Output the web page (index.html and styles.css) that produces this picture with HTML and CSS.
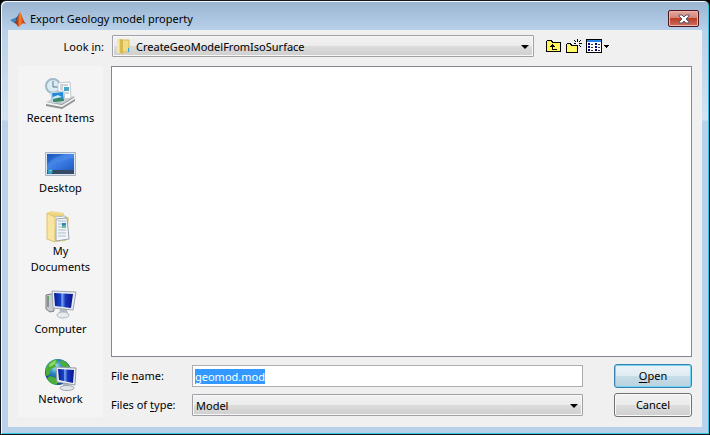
FILE: index.html
```html
<!DOCTYPE html>
<html lang="en">
<head>
<meta charset="utf-8">
<title>Export Geology model property</title>
<link rel="stylesheet" href="styles.css">
</head>
<body>
<main class="window">
  <header class="titlebar">
    <svg class="app-icon" viewBox="0 0 16 16" aria-hidden="true">
      <defs><linearGradient id="flame"><stop offset="0" stop-color="#5b1c2c"/><stop offset=".3" stop-color="#b8401c"/><stop offset=".5" stop-color="#f08a30"/><stop offset=".7" stop-color="#e0501c"/><stop offset="1" stop-color="#8a1a14"/></linearGradient></defs>
      <path d="M0 9l5-2 2 3-3 2z" fill="#3f86b8"/>
      <path d="M5 7c2 0 3-3 5-6L7 10z" fill="#245a8c"/>
      <path d="M4 12c2-1 4-7 6-11 2 2 3 9 6 12-2-1-3-1-4 0s-2 2-4 3c-1-2-2-4-4-4z" fill="url(#flame)"/>
    </svg>
    <h1 class="title">Export Geology model property</h1>
    <button class="close" type="button" aria-label="Close">
      <svg viewBox="0 0 12 10" aria-hidden="true"><path d="M1 1h3l2 2 2-2h3v1L8 5l3 3v1H8L6 7 4 9H1V8l3-3-3-3z" fill="#fff" stroke="#555a70"/></svg>
    </button>
  </header>

  <form class="dialog">
    <div class="lookin">
      <label class="lookin-label" for="folder">Look <u>i</u>n:</label>
      <div class="combo combo-folder">
        <select id="folder"><option>CreateGeoModelFromIsoSurface</option></select>
        <svg class="folder-icon" viewBox="0 0 16 16" aria-hidden="true">
          <path d="M2 1h5v14H2z" fill="#efd878"/><path d="M2 1h2v14H2z" fill="#f8e9a0"/>
          <path d="M7 2h7v12H7z" fill="#f0dc84" stroke="#d9bd58"/><path d="M5 1l3 1v14l-3-1z" fill="#d8b850"/>
          <path d="M13 10h1v4h-1z" fill="#3aa6dc"/>
        </svg>
      </div>
      <div class="tools">
        <button type="button" aria-label="Up one level">
          <svg width="16" height="14" viewBox="0 0 16 14" shape-rendering="crispEdges" aria-hidden="true"><path d="M.5 12.500v-10l1-1h4l1 2h8v9z" fill="#fff45a" stroke="#000"/><path d="M6 5h1v1h1v1h1v1H7v2h4v1H6V8H4V7h1V6h1z" fill="#000"/></svg>
        </button>
        <button type="button" aria-label="Create new folder">
          <svg width="16" height="16" viewBox="0 0 16 16" shape-rendering="crispEdges" aria-hidden="true"><path d="M.5 14.500v-8l1-1h3l1 2h6v7z" fill="#fff766" stroke="#000"/><path d="M11 1h1v3h-1zM11 7h1v2h-1zM13 5h3v1h-3zM8 5h2v1H8zM9 3h1v1H9zM8 2h1v1H8zM13 3h1v1h-1zM14 2h1v1h-1zM13 7h1v1h-1zM14 8h1v1h-1z" fill="#000"/><path d="M10 4h2v2h-2z" fill="#fff"/></svg>
        </button>
        <button type="button" aria-label="View menu">
          <svg width="23" height="14" viewBox="0 0 23 14" shape-rendering="crispEdges" aria-hidden="true"><path d="M.5.5h15v13H.5z" fill="#fff" stroke="#000"/><path d="M1 1h14v2H1z" fill="#2585ea"/><path d="M2 4h2v2H2zM2 7h2v2H2zM2 10h2v2H2zM9 4h2v2H9zM9 7h2v2H9zM9 10h2v2H9z" fill="#00008b"/><path d="M5 5h2v1H5zM5 8h2v1H5zM5 11h2v1H5zM12 5h2v1h-2zM12 8h2v1h-2zM12 11h2v1h-2z" fill="#333"/><path d="M18 6h5v1h-1v1h-1v1h-1V8h-1V7h-1z" fill="#000"/></svg>
        </button>
      </div>
    </div>

    <div class="content">
      <nav class="places">
        <button type="button" class="place">
          <svg viewBox="0 0 32 32" aria-hidden="true">
            <path d="M1 25l8-4 21-2v4l-13 8L1 28z" fill="#8e9294"/><path d="M1 24l9-5 20-1-13 8z" fill="#cfd1d0"/><path d="M1 24l16 3 13-8v2l-13 8-16-3z" fill="#f0f0ee"/>
            <circle cx="8" cy="8" r="7" fill="#dcecf4" stroke="#9eb9c8" stroke-width="2"/><path d="M8 3v6h5" fill="none" stroke="#587a91"/>
            <path d="M13 5l12-1 1 16-13 2z" fill="#fff" stroke="#c3c8ca"/><path d="M15 7h8M15 9h3M15 11h3M20 15h4" stroke="#9ca9b0"/><path d="M19 9h5v4h-5z" fill="#4aa5c8"/>
            <path d="M6 14l13-1 1 11-13 1z" fill="#f7fafb" stroke="#b4c7ce"/><path d="M7 15l11-1 1 9-11 1z" fill="#2389d8"/><path d="M8 22l5-3 6 3v1l-11 1z" fill="#3c8960"/><path d="M8 19l5-2 4 2-9 2z" fill="#c7e8f4"/>
          </svg>
          <span>Recent Items</span>
        </button>
        <button type="button" class="place">
          <svg viewBox="0 0 32 32" aria-hidden="true">
            <defs><linearGradient id="desk" x2="1" y2="1"><stop stop-color="#1654b8"/><stop offset=".5" stop-color="#3b7ee6"/><stop offset="1" stop-color="#2058bd"/></linearGradient></defs>
            <path d="M.5 4.500h30v23H.5z" fill="#dce4ed" stroke="#a8b3c4"/><path d="M2 6h27v17H2z" fill="url(#desk)"/><path d="M2 17c6-8 12-9 18-11h9v4C17 11 9 16 2 22z" fill="#5a98f0" opacity=".45"/><path d="M2 22h27v4H2z" fill="#344a67"/><circle cx="5" cy="23.500" r="2.500" fill="#32a3d0"/><path d="M4 22h1v1H4z" fill="#f08a3c"/><path d="M5 22h2v1H5z" fill="#8cdb64"/>
          </svg>
          <span>Desktop</span>
        </button>
        <button type="button" class="place">
          <svg viewBox="0 0 32 32" aria-hidden="true">
            <path d="M2 2l4-2 13 2v5L7 29l-5-1z" fill="#f0d98a"/><path d="M8 3l13 2 3 2-3 23-12 1z" fill="#e8d07a"/><path d="M9 6l11-1 2 22-11 2z" fill="#fff" stroke="#b5bdc0"/><path d="M11 8l11-1 2 21-13 2z" fill="#f2f6fa" stroke="#98a4ac"/><path d="M13 10h8M13 13h4M13 16h4M13 19h8M13 22h8M13 25h8" stroke="#a8bac4"/><path d="M17 12h4v5h-4z" fill="#288bc1"/><path d="M17 15l4-1v3h-4z" fill="#79b991"/><path d="M2 2l8 4v25l-8-3z" fill="#f8e5a2" stroke="#dec16c"/>
          </svg>
          <span>My<br>Documents</span>
        </button>
        <button type="button" class="place">
          <svg viewBox="0 0 32 32" aria-hidden="true">
            <defs><linearGradient id="screen"><stop stop-color="#061d91"/><stop offset=".35" stop-color="#1743c9"/><stop offset=".42" stop-color="#7da6f5"/><stop offset=".6" stop-color="#1837bb"/><stop offset="1" stop-color="#08138e"/></linearGradient></defs>
            <path d="M1 6l5-1 3 1v16l-4 1-4-3z" fill="#c9cccf" stroke="#797e83"/><path d="M2 7h2v11H2z" fill="#8a9095"/><path d="M2 8h2v2H2z" fill="#3ebb40"/>
            <path d="M15 20h7l1 6h-9z" fill="#b8bdc4"/><ellipse cx="18" cy="26" rx="6" ry="3" fill="#e8ebed" stroke="#afb6be"/><path d="M7 2l24 1-3 18-20-2z" fill="#e8ebef" stroke="#9da5b0"/><path d="M9 4l19 1-2 14-16-2z" fill="url(#screen)"/>
          </svg>
          <span>Computer</span>
        </button>
        <button type="button" class="place">
          <svg viewBox="0 0 32 32" aria-hidden="true">
            <defs><radialGradient id="globe" cx=".4" cy=".3"><stop stop-color="#b5edfc"/><stop offset=".5" stop-color="#328bc6"/><stop offset="1" stop-color="#104d97"/></radialGradient></defs>
            <circle cx="13" cy="13" r="13" fill="url(#globe)"/><path d="M1 9c2-5 6-8 10-9l2 3-3 2 1 3-5 2-2 6-3 1zM16 1c5 1 8 5 9 8l-7-1-3-4zM5 17l6 2 2 5-2 2c-5-1-8-4-9-7z" fill="#4caf38"/><path d="M4 6c2-2 4-4 7-5l-1 4-5 3z" fill="#8fdb66"/>
            <path d="M18 23h6v5h-6z" fill="#adb4bc"/><ellipse cx="22" cy="29" rx="7" ry="2.500" fill="#e2e6e9" stroke="#a0a7af"/><path d="M11 8l20 1-1 17-18-3z" fill="#e9edf1" stroke="#929ca9"/><path d="M13 10l16 1-1 13-14-3z" fill="url(#screen)"/>
          </svg>
          <span>Network</span>
        </button>
      </nav>

      <div class="browser">
        <div class="files" role="listbox" aria-label="Files"></div>
        <div class="fields">
          <label for="filename">File <u>n</u>ame:</label>
          <input class="filename" id="filename" type="text" value="geomod.mod" autocomplete="off" spellcheck="false">
          <button class="btn btn-default" type="button"><u>O</u>pen</button>
          <label for="filetype">Files of <u>t</u>ype:</label>
          <div class="combo"><select id="filetype"><option>Model</option></select></div>
          <button class="btn" type="button">Cancel</button>
        </div>
      </div>
    </div>
  </form>
</main>
<script src="dialog.js"></script>
</body>
</html>
```
FILE: styles.css
```css
* { box-sizing: border-box; }

body {
  margin: 0;
  background: #000;
  color: #000;
  font: 11px/16px "Noto Sans", "Open Sans", sans-serif;
}

button, input, select { font: inherit; color: inherit; margin: 0; }
u { text-underline-offset: 2px; }

.window {
  display: flex;
  flex-direction: column;
  min-height: 100vh;
  padding: 0 7px 7px;
  border: 1px solid #14181e;
  border-radius: 6px 6px 0 0;
  background: linear-gradient(#99b4d1, #b9d1ea 30px, #d3e3f3 119px, #b9d1ea 120px);
  box-shadow: inset 1px 1px #f4f9fd, inset -1px -1px #35c5dc;
}

.titlebar {
  display: flex;
  align-items: center;
  height: 29px;
  padding: 6px 3px 0 2px;
  gap: 4px;
}
.app-icon { width: 16px; height: 16px; }
.title { flex: 1; margin: 0; font-size: 11px; font-weight: 400; }

.close {
  display: flex;
  align-items: center;
  justify-content: center;
  width: 31px;
  height: 17px;
  padding: 0;
  border: 1px solid #4c1720;
  border-radius: 2px;
  background: linear-gradient(#e4a99f, #d58475 45%, #b93e27 50%, #cf705c);
  box-shadow: inset 0 0 0 1px #e9b6ad;
}
.close svg { width: 12px; height: 10px; }

.dialog {
  display: flex;
  flex: 1;
  flex-direction: column;
  gap: 9px;
  padding: 5px 10px 10px;
  background: #f0f0f0;
}

.lookin { display: flex; align-items: center; }
.lookin-label { width: 94px; padding: 2px 8px 0 0; text-align: right; }
.lookin .combo { flex: 1; }

.combo { position: relative; }
.combo select {
  display: block;
  width: 100%;
  height: 22px;
  padding: 1px 20px 0 3px;
  border: 1px solid #a0a0a6;
  border-radius: 1px;
  appearance: none;
  background: linear-gradient(#f2f2f2, #ebebeb 50%, #dcdcdc 50%, #cfcfcf);
  box-shadow: inset 0 0 0 1px #f8f8f8;
}
.combo::after {
  content: "";
  position: absolute;
  top: 10px;
  right: 5px;
  border: 4px solid transparent;
  border-top-color: #000;
  border-bottom: 0;
  pointer-events: none;
}
.combo-folder select { padding-left: 23px; }
.folder-icon {
  position: absolute;
  top: 3px;
  left: 3px;
  width: 16px;
  height: 16px;
  pointer-events: none;
}

.tools {
  display: flex;
  align-items: center;
  gap: 4px;
  width: 158px;
  padding-left: 12px;
}
.tools button { display: flex; padding: 0; border: 0; background: none; }

.content { display: flex; flex: 1; gap: 8px; }

.places {
  display: flex;
  flex-direction: column;
  width: 85px;
  background: #f4f4f4;
}
.place {
  display: flex;
  flex: 1;
  flex-direction: column;
  align-items: center;
  justify-content: center;
  min-height: 70px;
  padding: 2px 0 0;
  border: 0;
  background: none;
}
.place svg { width: 32px; height: 32px; }

.browser { display: flex; flex: 1; flex-direction: column; gap: 7px; }
.files { flex: 1; border: 1px solid #828790; background: #fff; }

.fields {
  display: grid;
  grid-template-columns: 81px 1fr 78px;
  row-gap: 5px;
  align-items: center;
}
.fields .filename, .fields .combo { margin-right: 31px; }
.filename {
  min-width: 0;
  height: 22px;
  padding: 0 2px;
  border: 1px solid #abadb3;
  outline: 0;
  background: #fff;
}
.filename::selection { background: #39f; color: #fff; }

.btn {
  height: 24px;
  padding: 0;
  border: 1px solid #707070;
  border-radius: 3px;
  background: linear-gradient(#f2f2f2, #ebebeb 50%, #dddddd 50%, #cfcfcf);
  box-shadow: inset 0 0 0 1px #fafafa;
}
.btn-default {
  border-color: #3c7fb1;
  background: linear-gradient(#edf3f6, #dfebf1 50%, #c8dde8 50%, #b9d2df);
  box-shadow: inset 0 0 0 1px #70d5f5;
}
```
FILE: dialog.js
```js
// The proposed name is selected so that typing replaces it.
const filename = document.getElementById("filename");
filename.focus();
filename.select();
```
